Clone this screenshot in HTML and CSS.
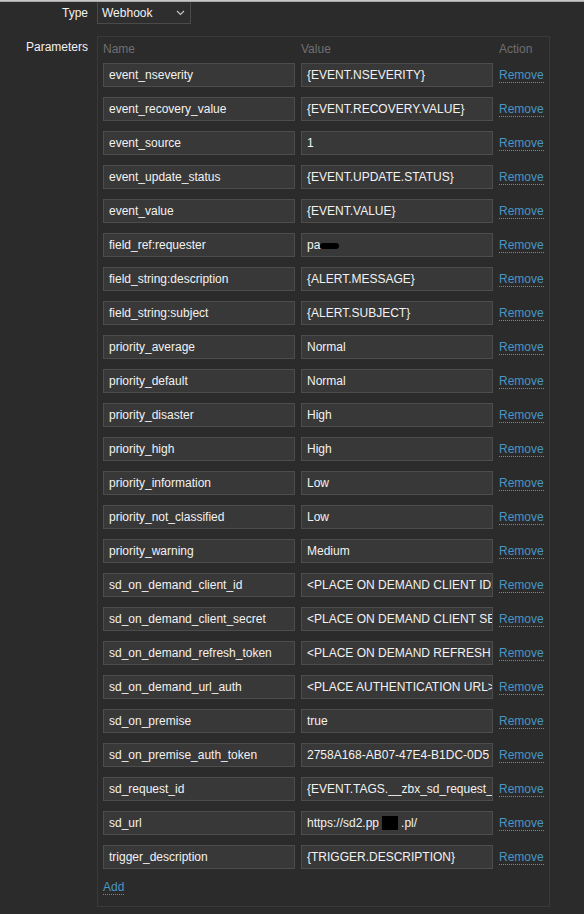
FILE: index.html
```html
<!DOCTYPE html>
<html lang="en">
<head>
<meta charset="utf-8">
<title>Media type</title>
<link rel="stylesheet" href="styles.css">
</head>
<body>
<div class="topline"></div>
<div class="form">
  <div class="label type-label">Type</div>
  <div class="control">
    <div class="select">
      <span>Webhook</span>
      <svg class="chev" width="9" height="6" viewBox="0 0 9 6"><path d="M1 1 L4.5 4.5 L8 1" fill="none" stroke="#c8c8c8" stroke-width="1.1"/></svg>
    </div>
  </div>
  <div class="label params-label">Parameters</div>
  <div class="control">
    <div class="params">
      <div class="th">Name</div><div class="th">Value</div><div class="th">Action</div>

      <div class="field">event_nseverity</div><div class="field">{EVENT.NSEVERITY}</div><div class="act"><a class="link">Remove</a></div>
      <div class="field">event_recovery_value</div><div class="field">{EVENT.RECOVERY.VALUE}</div><div class="act"><a class="link">Remove</a></div>
      <div class="field">event_source</div><div class="field">1</div><div class="act"><a class="link">Remove</a></div>
      <div class="field">event_update_status</div><div class="field">{EVENT.UPDATE.STATUS}</div><div class="act"><a class="link">Remove</a></div>
      <div class="field">event_value</div><div class="field">{EVENT.VALUE}</div><div class="act"><a class="link">Remove</a></div>
      <div class="field">field_ref:requester</div><div class="field">pa<span class="blob"></span></div><div class="act"><a class="link">Remove</a></div>
      <div class="field">field_string:description</div><div class="field">{ALERT.MESSAGE}</div><div class="act"><a class="link">Remove</a></div>
      <div class="field">field_string:subject</div><div class="field">{ALERT.SUBJECT}</div><div class="act"><a class="link">Remove</a></div>
      <div class="field">priority_average</div><div class="field">Normal</div><div class="act"><a class="link">Remove</a></div>
      <div class="field">priority_default</div><div class="field">Normal</div><div class="act"><a class="link">Remove</a></div>
      <div class="field">priority_disaster</div><div class="field">High</div><div class="act"><a class="link">Remove</a></div>
      <div class="field">priority_high</div><div class="field">High</div><div class="act"><a class="link">Remove</a></div>
      <div class="field">priority_information</div><div class="field">Low</div><div class="act"><a class="link">Remove</a></div>
      <div class="field">priority_not_classified</div><div class="field">Low</div><div class="act"><a class="link">Remove</a></div>
      <div class="field">priority_warning</div><div class="field">Medium</div><div class="act"><a class="link">Remove</a></div>
      <div class="field">sd_on_demand_client_id</div><div class="field"><span class="clip">&lt;PLACE ON DEMAND CLIENT ID&gt;</span></div><div class="act"><a class="link">Remove</a></div>
      <div class="field">sd_on_demand_client_secret</div><div class="field"><span class="clip">&lt;PLACE ON DEMAND CLIENT SECRET&gt;</span></div><div class="act"><a class="link">Remove</a></div>
      <div class="field">sd_on_demand_refresh_token</div><div class="field"><span class="clip">&lt;PLACE ON DEMAND REFRESH TOKEN&gt;</span></div><div class="act"><a class="link">Remove</a></div>
      <div class="field">sd_on_demand_url_auth</div><div class="field"><span class="clip">&lt;PLACE AUTHENTICATION URL&gt;</span></div><div class="act"><a class="link">Remove</a></div>
      <div class="field">sd_on_premise</div><div class="field">true</div><div class="act"><a class="link">Remove</a></div>
      <div class="field">sd_on_premise_auth_token</div><div class="field"><span class="clip">2758A168-AB07-47E4-B1DC-0D5</span></div><div class="act"><a class="link">Remove</a></div>
      <div class="field">sd_request_id</div><div class="field"><span class="clip">{EVENT.TAGS.__zbx_sd_request_id}</span></div><div class="act"><a class="link">Remove</a></div>
      <div class="field">sd_url</div><div class="field">https://sd2.pp<span class="block"></span>.pl/</div><div class="act"><a class="link">Remove</a></div>
      <div class="field">trigger_description</div><div class="field">{TRIGGER.DESCRIPTION}</div><div class="act"><a class="link">Remove</a></div>

      <div class="add"><a class="link">Add</a></div>
    </div>
  </div>
</div>
</body>
</html>
```
FILE: styles.css
```css
html, body {
  margin: 0;
  padding: 0;
  background: #2b2b2b;
}
body {
  font-family: "Liberation Sans", Arial, sans-serif;
  font-size: 12px;
  color: #f2f2f2;
  height: 914px;
  overflow: hidden;
}
.topline {
  height: 2px;
  background: linear-gradient(#d6d6d6, #9a9a9a);
}
.form {
  display: grid;
  grid-template-columns: 88px 1fr;
  column-gap: 9px;
  row-gap: 12px;
  align-items: start;
}
.label {
  text-align: right;
  line-height: 14px;
}
.type-label {
  padding-top: 4px;
}
.params-label {
  padding-top: 4px;
}
.control {
  display: flex;
}
.select {
  width: 94px;
  height: 22px;
  box-sizing: border-box;
  border: 1px solid #4a4a4a;
  border-top: none;
  background: #2e2e2e;
  display: flex;
  align-items: center;
  justify-content: space-between;
  padding: 0 5px 0 4px;
  line-height: 14px;
}
.chev {
  display: block;
  margin-top: 1px;
}
.params {
  width: 453px;
  box-sizing: border-box;
  border: 1px solid #3a3a3a;
  padding: 5px 5px 11px 5px;
  display: grid;
  grid-template-columns: 192px 192px 1fr;
  column-gap: 6px;
  row-gap: 10px;
  align-items: center;
}
.th {
  color: #6f6f6f;
  line-height: 15px;
  margin-bottom: -4px;
}
.field {
  height: 24px;
  box-sizing: border-box;
  border: 1px solid #4c4c4c;
  background: #383838;
  padding: 0 0 0 5px;
  line-height: 22px;
  white-space: nowrap;
  overflow: hidden;
  display: flex;
  align-items: center;
}
.clip {
  display: block;
  overflow: hidden;
  white-space: nowrap;
  min-width: 0;
  max-width: 185px;
}
.act {
  display: flex;
  align-items: center;
}
.link {
  color: #4796c4;
  line-height: 14px;
  border-bottom: 1px dotted #4796c4;
  cursor: pointer;
}
.blob {
  display: inline-block;
  width: 19px;
  height: 6px;
  border-radius: 3px;
  background: #000;
  margin-top: 1px;
}
.block {
  display: inline-block;
  width: 16px;
  height: 14px;
  background: #000;
  margin: 0 3px 0 3px;
}
.add {
  grid-column: 1 / 4;
  line-height: 15px;
  margin-top: 1px;
}
```
